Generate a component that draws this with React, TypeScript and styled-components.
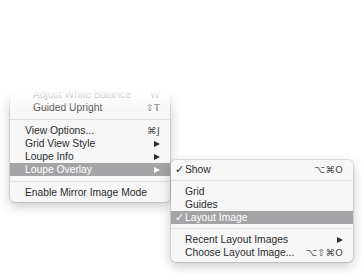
import React from "react";
import styled, { createGlobalStyle } from "styled-components";

const GlobalStyle = createGlobalStyle`
  html, body {
    margin: 0;
    padding: 0;
    background: #ffffff;
  }
  body {
    font-family: "Liberation Sans", Arial, "DejaVu Sans", sans-serif;
    -webkit-font-smoothing: antialiased;
  }
`;

const Stage = styled.div`
  position: relative;
  width: 363px;
  height: 276px;
  overflow: hidden;
  padding: 85px 0 0 10px;
  box-sizing: border-box;
  background: #ffffff;
`;

const TopFade = styled.div`
  position: absolute;
  left: 0;
  top: 0;
  width: 100%;
  height: 114px;
  background: linear-gradient(
    to bottom,
    #ffffff 0%,
    #ffffff 79%,
    rgba(255, 255, 255, 0.7) 86%,
    rgba(255, 255, 255, 0.25) 94%,
    rgba(255, 255, 255, 0) 100%
  );
  z-index: 3;
  pointer-events: none;
`;

const Menu = styled.div<{ $width: number }>`
  position: relative;
  width: ${p => p.$width}px;
  padding: 3px 0;
  background: #f7f7f7;
  border-radius: 5px;
  box-shadow: 0 0 0 1px rgba(0, 0, 0, 0.1), 0 4px 12px rgba(0, 0, 0, 0.22);
  font-size: 10.3px;
  color: #2b2b2b;
`;

const SubMenu = styled(Menu)`
  position: absolute;
  left: calc(100% + 1px);
  top: -3px;
  z-index: 2;
`;

const Row = styled.div<{ $active?: boolean; $indent?: boolean; $pad: number }>`
  position: relative;
  display: flex;
  align-items: center;
  height: 13px;
  padding-left: ${p => p.$pad + (p.$indent ? 8 : 0)}px;
  padding-right: 10px;
  background: ${p => (p.$active ? "#a4a4a7" : "transparent")};
  color: ${p => (p.$active ? "#ffffff" : "inherit")};
  white-space: nowrap;
`;

const Check = styled.span`
  position: absolute;
  left: 4px;
  top: 0;
  line-height: 13px;
  font-family: "DejaVu Sans", sans-serif;
  font-size: 11px;
  font-weight: bold;
`;

const Label = styled.span`
  flex: 1;
  line-height: 13px;
`;

const Shortcut = styled.span<{ $active?: boolean }>`
  font-family: "DejaVu Sans", sans-serif;
  font-size: 9.5px;
  line-height: 13px;
  letter-spacing: 0.3px;
  color: ${p => (p.$active ? "#ffffff" : "#4a4a4a")};
`;

const Arrow = styled.span<{ $active?: boolean }>`
  width: 0;
  height: 0;
  border-top: 3.5px solid transparent;
  border-bottom: 3.5px solid transparent;
  border-left: 6px solid ${p => (p.$active ? "#ffffff" : "#2b2b2b")};
`;

const Separator = styled.div<{ $h: number }>`
  height: ${p => p.$h}px;
  display: flex;
  align-items: center;
  &::after {
    content: "";
    flex: 1;
    height: 1px;
    background: #e1e1e1;
  }
`;

type ItemProps = {
  label: string;
  shortcut?: string;
  arrow?: boolean;
  active?: boolean;
  indent?: boolean;
  checked?: boolean;
  pad: number;
  children?: React.ReactNode;
};

function Item({ label, shortcut, arrow, active, indent, checked, pad, children }: ItemProps) {
  return (
    <Row $active={active} $indent={indent} $pad={pad}>
      {checked && <Check>✓</Check>}
      <Label>{label}</Label>
      {shortcut && <Shortcut $active={active}>{shortcut}</Shortcut>}
      {arrow && <Arrow $active={active} />}
      {children}
    </Row>
  );
}

export default function App() {
  return (
    <>
      <GlobalStyle />
      <Stage>
        <TopFade />
        <Menu $width={160}>
          <Item pad={15} indent label="Adjust White Balance" shortcut="W" />
          <Item pad={15} indent label="Guided Upright" shortcut="⇧T" />
          <Separator $h={10} />
          <Item pad={15} label="View Options..." shortcut="⌘J" />
          <Item pad={15} label="Grid View Style" arrow />
          <Item pad={15} label="Loupe Info" arrow />
          <Item pad={15} label="Loupe Overlay" arrow active>
            <SubMenu $width={182}>
              <Item pad={14} checked label="Show" shortcut="⌥⌘O" />
              <Separator $h={9} />
              <Item pad={14} label="Grid" />
              <Item pad={14} label="Guides" />
              <Item pad={14} checked active label="Layout Image" />
              <Separator $h={9} />
              <Item pad={14} label="Recent Layout Images" arrow />
              <Item pad={14} label="Choose Layout Image..." shortcut="⌥⇧⌘O" />
            </SubMenu>
          </Item>
          <Separator $h={10} />
          <Item pad={15} label="Enable Mirror Image Mode" />
        </Menu>
      </Stage>
    </>
  );
}
